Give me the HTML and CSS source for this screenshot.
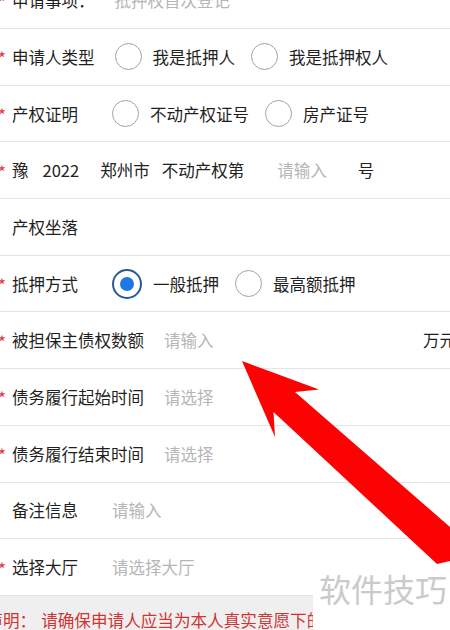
FILE: index.html
```html
<!DOCTYPE html>
<html lang="zh-CN">
<head>
<meta charset="utf-8">
<title>抵押权首次登记</title>
<link rel="stylesheet" href="styles.css">
</head>
<body>
<div class="page">
  <div class="form">
    <div class="row">
      <span class="req">*</span><span class="label">申请事项：</span>
      <span class="ph">抵押权首次登记</span>
    </div>
    <div class="row">
      <span class="req">*</span><span class="label">申请人类型</span>
      <span class="opt"><span class="dot"></span>我是抵押人</span>
      <span class="opt"><span class="dot"></span>我是抵押权人</span>
    </div>
    <div class="row">
      <span class="req">*</span><span class="label">产权证明</span>
      <span class="opt"><span class="dot"></span>不动产权证号</span>
      <span class="opt"><span class="dot"></span>房产证号</span>
    </div>
    <div class="row">
      <span class="req">*</span>
      <span class="txt">豫</span>
      <span class="txt y">2022</span>
      <span class="txt c">郑州市</span>
      <span class="txt k">不动产权第</span>
      <span class="ph n">请输入</span>
      <span class="txt h">号</span>
    </div>
    <div class="row">
      <span class="req"></span><span class="label">产权坐落</span>
    </div>
    <div class="row">
      <span class="req">*</span><span class="label">抵押方式</span>
      <span class="opt"><span class="dot on"></span>一般抵押</span>
      <span class="opt"><span class="dot"></span>最高额抵押</span>
    </div>
    <div class="row">
      <span class="req">*</span><span class="label">被担保主债权数额</span>
      <span class="ph">请输入</span>
      <span class="unit">万元</span>
    </div>
    <div class="row">
      <span class="req">*</span><span class="label">债务履行起始时间</span>
      <span class="ph">请选择</span>
    </div>
    <div class="row">
      <span class="req">*</span><span class="label">债务履行结束时间</span>
      <span class="ph">请选择</span>
    </div>
    <div class="row">
      <span class="req"></span><span class="label">备注信息</span>
      <span class="ph">请输入</span>
    </div>
    <div class="row">
      <span class="req">*</span><span class="label">选择大厅</span>
      <span class="ph">请选择大厅</span>
    </div>
  </div>
  <div class="footer">
    <p class="notice">声明：<span class="notice-body">请确保申请人应当为本人真实意愿下的申请，不得冒用他人身份</span></p>
  </div>
  <div class="watermark">软件技巧</div>
  <svg class="arrow" width="450" height="630" viewBox="0 0 450 630" aria-hidden="true">
    <polygon points="242,361 319,389.5 295,392 450,527 450,561 437,564 273.5,412 275,437" fill="#fd0202"/>
  </svg>
</div>
</body>
</html>
```
FILE: styles.css
```css
* { box-sizing: border-box; }
html, body {
  margin: 0;
  padding: 0;
  width: 450px;
  height: 630px;
  overflow: hidden;
  background: #ffffff;
}
body {
  font-family: "Noto Sans CJK SC", "Noto Sans", sans-serif;
  color: #222222;
}
.page {
  position: relative;
  width: 450px;
  height: 630px;
  overflow: hidden;
}
.form {
  margin-top: -27.7px;
}
.row {
  display: flex;
  align-items: center;
  height: 56.7px;
  border-bottom: 1px solid #e4e4e4;
  font-size: 16.5px;
  white-space: nowrap;
}
.req {
  flex: none;
  width: 14px;
  margin-left: -2px;
  color: #e0393e;
  font-size: 17px;
  position: relative;
  top: 1px;
}
.label {
  flex: none;
  min-width: 80px;
  margin-right: 20px;
  color: #1f1f1f;
}
.ph {
  color: #b6b6b6;
}
.opt {
  display: flex;
  align-items: center;
  margin-right: 16px;
  color: #1f1f1f;
}
.dot {
  flex: none;
  width: 27px;
  height: 27px;
  border-radius: 50%;
  border: 1px solid #a2a2a2;
  margin-right: 11px;
}
.dot.on {
  width: 30px;
  height: 30px;
  border: 2px solid #285a92;
  display: flex;
  align-items: center;
  justify-content: center;
  margin-right: 11px;
}
.dot.on::after {
  content: "";
  width: 14px;
  height: 14px;
  border-radius: 50%;
  background: #1d78e4;
}
.txt.y { margin-left: 14px; }
.txt.c { margin-left: 21px; }
.txt.k { margin-left: 12px; }
.ph.n { margin-left: 33px; }
.txt.h { margin-left: 31px; }
.unit {
  margin-left: auto;
  margin-right: -6px;
  color: #1f1f1f;
}
.footer {
  background: #efefef;
  height: 60px;
  padding-top: 12px;
}
.notice {
  margin: 0 0 0 -13.6px;
  font-size: 16.6px;
  line-height: 24px;
  color: #cf3434;
  white-space: nowrap;
}
.notice-body {
  margin-left: 5px;
}
.watermark {
  position: absolute;
  left: 313px;
  top: 570px;
  width: 137px;
  height: 60px;
  background: #ffffff;
  padding-left: 6px;
  font-size: 32px;
  line-height: 36px;
  color: #cacaca;
  white-space: nowrap;
}
.arrow {
  position: absolute;
  left: 0;
  top: 0;
  pointer-events: none;
}
```
